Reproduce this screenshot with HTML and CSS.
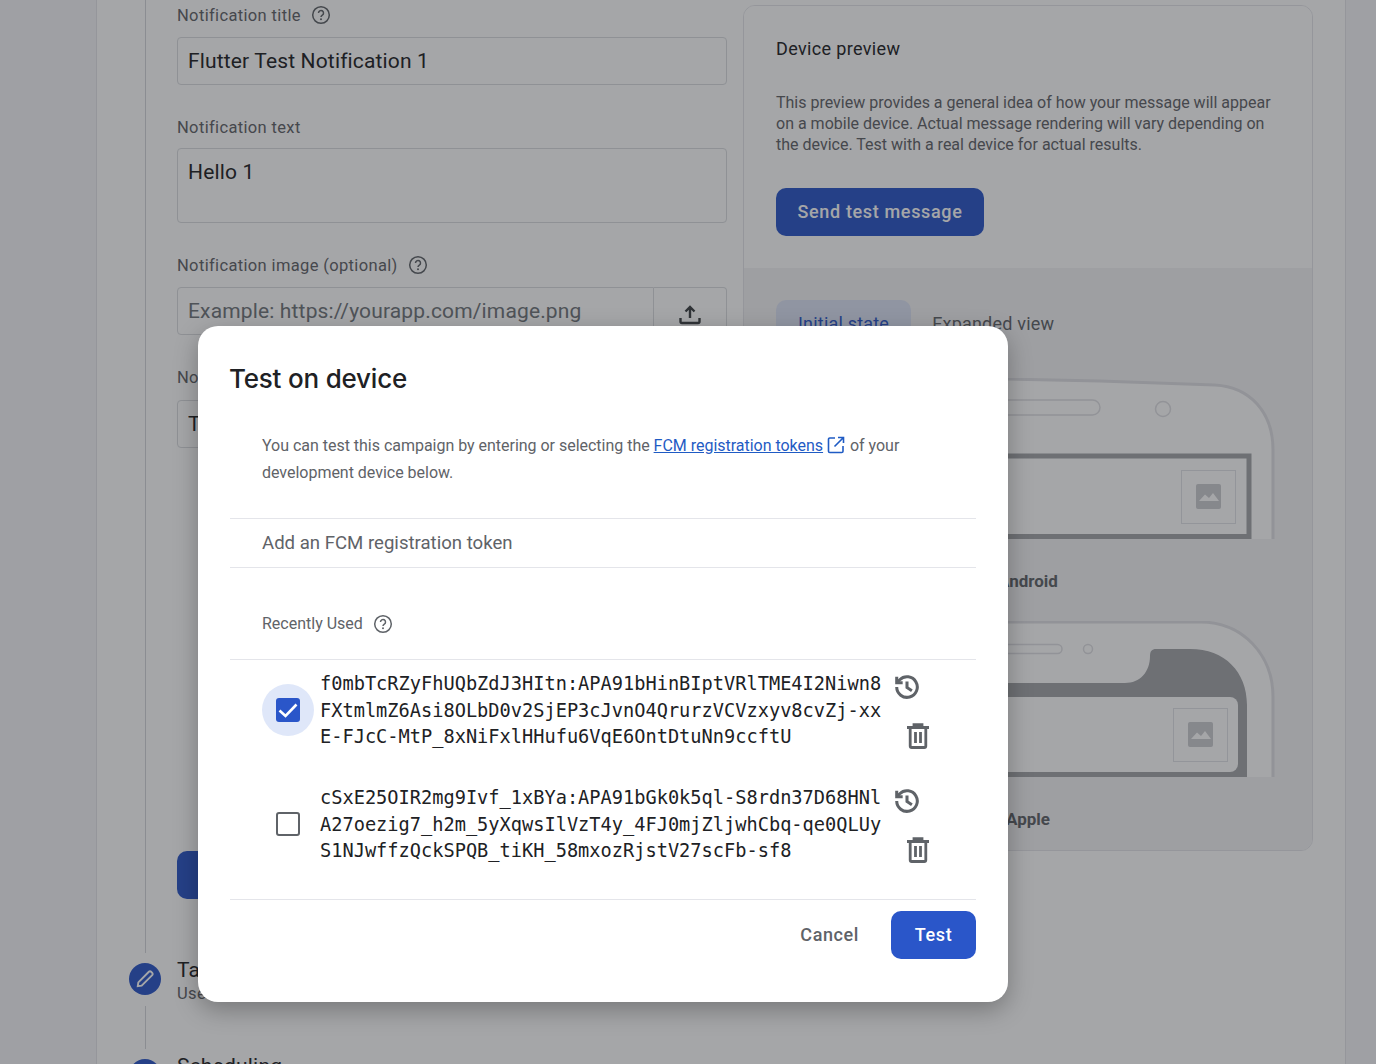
FILE: index.html
```html
<!DOCTYPE html>
<html lang="en">
    <head>
        <meta charset="UTF-8" />
        <meta name="viewport" content="width=device-width, initial-scale=1.0" />
        <title>Test on device</title>
        <link rel="stylesheet" href="styles.css">
    </head>
    <body>
        <div class="page">
            <div class="step-content">
                <form class="compose-form">
                    <div class="field-label">Notification title <svg class="help-icon" viewBox="0 0 20 20"><use href="#help" /></svg></div>
                    <input class="text-input" type="text" value="Flutter Test Notification 1" />

                    <div class="field-label">Notification text</div>
                    <textarea class="text-input text-area">Hello 1</textarea>

                    <div class="field-label">Notification image (optional) <svg class="help-icon" viewBox="0 0 20 20"><use href="#help" /></svg></div>
                    <div class="input-group">
                        <input class="text-input" type="text" placeholder="Example: https://yourapp.com/image.png" />
                        <div class="upload-button">
                            <svg width="24" height="24" viewBox="0 0 24 24" fill="none" stroke="#3c4043" stroke-width="2.4">
                                <path d="M12 16V5M7.5 9.5 12 5l4.500 4.500M2.500 16v3.500a1.500 1.500 0 0 0 1.500 1.500h16a1.500 1.500 0 0 0 1.500-1.500V16" />
                            </svg>
                        </div>
                    </div>

                    <div class="field-label field-label-tight">Notification name (optional)</div>
                    <input class="text-input" type="text" value="Test campaign" />

                    <button class="primary-button next-button" type="button">Next</button>
                </form>

                <section class="preview-panel">
                    <div class="preview-head">
                        <h3 class="preview-title">Device preview</h3>
                        <p class="preview-text">This preview provides a general idea of how your message will appear on a mobile device. Actual message rendering will vary depending on the device. Test with a real device for actual results.</p>
                        <button class="primary-button send-button" type="button">Send test message</button>
                    </div>
                    <div class="preview-body">
                        <div class="preview-tabs">
                            <span class="tab tab-active">Initial state</span>
                            <span class="tab">Expanded view</span>
                        </div>

                        <svg class="phone phone-android" width="495" height="161" viewBox="780 378 495 161">
                            <path class="phone-shell" d="M780 376 1008 379 1100 381 1215 385C1250 387 1273 412 1273 450V550H780Z" />
                            <rect class="phone-detail" x="900" y="400" width="200" height="15" rx="7.500" />
                            <circle class="phone-detail" cx="1163" cy="409" r="7.500" />
                            <rect class="phone-screen" x="800" y="456" width="449" height="80.500" />
                            <rect class="image-box" x="1181.500" y="470.500" width="54" height="53" />
                            <rect class="image-tile" x="1196" y="484" width="25" height="25" rx="2" />
                            <path class="image-peaks" d="M1199 501 1205 494.500 1209 498 1213 493 1219 501Z" />
                        </svg>
                        <div class="phone-label">Android</div>

                        <svg class="phone phone-apple" width="495" height="156" viewBox="780 621 495 156">
                            <path class="phone-shell" d="M780 622H1200C1243 622 1273 655 1273 697V790H780Z" />
                            <rect class="phone-detail" x="900" y="644.500" width="162" height="9" rx="4.500" />
                            <circle class="phone-detail" cx="1088" cy="649" r="4.500" />
                            <path class="phone-notch" d="M800 683H1125C1140 683 1150 672 1150 656 1150 651 1152 649 1156 649H1190C1225 649 1247 672 1247 705V777H800Z" />
                            <rect class="phone-card" x="800" y="697" width="438" height="75" rx="8" />
                            <rect class="image-box" x="1173.500" y="708.500" width="54" height="53" />
                            <rect class="image-tile" x="1188" y="722" width="25" height="25" rx="2" />
                            <path class="image-peaks" d="M1191 739 1197 732.500 1201 736 1205 731 1211 739Z" />
                        </svg>
                        <div class="phone-label">Apple</div>
                    </div>
                </section>
            </div>

            <div class="step-row">
                <span class="step-circle">
                    <svg width="20" height="20" viewBox="0 0 18 18" fill="none" stroke="#fff" stroke-width="1.700">
                        <path d="M2.500 15.500 3 12 12.500 2.500a1.400 1.400 0 0 1 2 0l1 1a1.400 1.400 0 0 1 0 2L6 15Z" />
                    </svg>
                </span>
                <div class="step-text">
                    <div class="step-title">Target</div>
                    <div class="step-sub">User segment</div>
                </div>
            </div>
            <div class="step-line"></div>
            <div class="step-row step-row-next">
                <span class="step-circle"></span>
                <div class="step-title">Scheduling</div>
            </div>
        </div>

        <div class="scrim"></div>

        <div class="dialog">
            <h2 class="dialog-title">Test on device</h2>
            <p class="dialog-text">You can test this campaign by entering or selecting the <a class="dialog-link" href="#">FCM registration tokens</a>
                <svg class="external-icon" width="18" height="18" viewBox="0 0 18 18" fill="none" stroke="#1f5bc4" stroke-width="1.600"><path d="M8 2H2.800A1.300 1.300 0 0 0 1.500 3.300v11.900a1.300 1.300 0 0 0 1.300 1.300h11.900a1.300 1.300 0 0 0 1.300-1.300V10M11 1.500h5.500V7M16.500 1.500 7.500 10.500" /></svg>
                of your development device below.</p>

            <input class="token-input" type="text" placeholder="Add an FCM registration token" />

            <div class="recent-head">Recently Used <svg class="help-icon" viewBox="0 0 20 20"><use href="#help" /></svg></div>

            <div class="token-list">
                <div class="token-row">
                    <span class="check-wrap check-wrap-on">
                        <span class="checkbox checkbox-on">
                            <svg width="24" height="24" viewBox="0 0 24 24" fill="none" stroke="#fff" stroke-width="2.600"><path d="M3.500 12.500 9.500 18 20.500 6.500" /></svg>
                        </span>
                    </span>
                    <div class="token-value">f0mbTcRZyFhUQbZdJ3HItn:APA91bHinBIptVRlTME4I2Niwn8FXtmlmZ6Asi8OLbD0v2SjEP3cJvnO4QrurzVCVzxyv8cvZj-xxE-FJcC-MtP_8xNiFxlHHufu6VqE6OntDtuNn9ccftU</div>
                    <div class="token-actions">
                        <svg class="history-icon" viewBox="0 0 24 24"><use href="#history" /></svg>
                        <svg class="trash-icon" viewBox="0 0 24 26"><use href="#trash" /></svg>
                    </div>
                </div>
                <div class="token-row">
                    <span class="check-wrap">
                        <span class="checkbox"></span>
                    </span>
                    <div class="token-value">cSxE25OIR2mg9Ivf_1xBYa:APA91bGk0k5ql-S8rdn37D68HNlA27oezig7_h2m_5yXqwsIlVzT4y_4FJ0mjZljwhCbq-qe0QLUyS1NJwffzQckSPQB_tiKH_58mxozRjstV27scFb-sf8</div>
                    <div class="token-actions">
                        <svg class="history-icon" viewBox="0 0 24 24"><use href="#history" /></svg>
                        <svg class="trash-icon" viewBox="0 0 24 26"><use href="#trash" /></svg>
                    </div>
                </div>
            </div>

            <div class="dialog-actions">
                <button class="cancel-button" type="button">Cancel</button>
                <button class="primary-button test-button" type="button">Test</button>
            </div>
        </div>

        <svg class="icon-defs" width="0" height="0">
            <symbol id="help" viewBox="0 0 20 20">
                <circle cx="10" cy="10" r="8.300" fill="none" stroke="currentColor" stroke-width="1.500" />
                <path d="M7.500 8a2.500 2.500 0 1 1 3.800 2.100c-.9.600-1.300 1-1.300 2" fill="none" stroke="currentColor" stroke-width="1.500" />
                <circle cx="10" cy="14.300" r="1" fill="currentColor" />
            </symbol>
            <symbol id="history" viewBox="0 0 24 24">
                <g fill="none" stroke="#5f6368" stroke-width="2.800">
                    <path d="M2.500 12a9.500 9.500 0 1 0 2.800-6.700L2.500 8" />
                    <path d="M2.500 2.500V8H8" />
                    <path d="M12 7v5.500l4.500 3" />
                </g>
            </symbol>
            <symbol id="trash" viewBox="0 0 24 26">
                <g fill="none" stroke="#5f6368" stroke-width="2.800">
                    <path d="M4.200 5v18a1.500 1.500 0 0 0 1.500 1.500h12.600a1.500 1.500 0 0 0 1.500-1.500V5" />
                    <path d="M1 4.500h22M8 4.500V1.700h8v2.800M9.500 9v11M14.500 9v11" />
                </g>
            </symbol>
        </svg>
    </body>
</html>
```

FILE: styles.css
```css
* {
    box-sizing: border-box;
}
body {
    margin: 0;
    height: 1064px;
    overflow: hidden;
    position: relative;
    background-color: #f6f6f9;
    font-family: Roboto, "Liberation Sans", sans-serif;
    color: #202124;
}

/* page behind the dialog */
.page {
    margin-left: 96px;
    width: 1250px;
    height: 1064px;
    overflow: hidden;
    background-color: #fff;
    border-left: 1px solid #e4e5ea;
    border-right: 1px solid #e4e5ea;
}
.step-content {
    display: flex;
    gap: 16px;
    height: 953px;
    margin-left: 48px;
    padding-left: 31px;
    border-left: 1px solid #d4d5da;
}
.compose-form {
    width: 550px;
    padding-top: 5px;
    flex-shrink: 0;
}
.field-label {
    display: flex;
    align-items: center;
    gap: 5px;
    height: 20px;
    margin-bottom: 12px;
    font-size: 16.500px;
    letter-spacing: 0.35px;
    color: #5f6368;
}
.field-label-tight {
    margin-bottom: 13px;
}
.help-icon {
    width: 20px;
    height: 20px;
    margin-left: 5px;
    color: #5f6368;
}
.text-input {
    display: block;
    width: 100%;
    height: 48px;
    margin-bottom: 32px;
    padding: 0 10px;
    border: 1px solid #dadce0;
    border-radius: 4px;
    background: #fff;
    font-family: inherit;
    font-size: 21px;
    letter-spacing: 0.15px;
    color: #202124;
}
.text-input::placeholder {
    color: #70757a;
    opacity: 1;
}
.text-area {
    height: 75px;
    margin-top: -1px;
    margin-bottom: 32px;
    padding-top: 11px;
    resize: none;
}
.input-group {
    display: flex;
    margin-bottom: 32px;
}
.input-group .text-input {
    width: 477px;
    margin-bottom: 0;
    border-radius: 4px 0 0 4px;
}
.upload-button {
    display: flex;
    align-items: center;
    justify-content: center;
    width: 73px;
    height: 48px;
    padding-top: 5px;
    border: 1px solid #dadce0;
    border-left: none;
    border-radius: 0 4px 4px 0;
}
.primary-button {
    padding: 0 0 2px;
    border: none;
    border-radius: 10px;
    background-color: #2a56c9;
    color: #fff;
    font-family: inherit;
    font-weight: 500;
    font-size: 18px;
    letter-spacing: 0.65px;
}
.next-button {
    display: block;
    width: 120px;
    height: 48px;
    margin-top: 403px;
}

.preview-panel {
    width: 570px;
    height: 846px;
    margin-top: 5px;
    overflow: hidden;
    border: 1px solid #e4e5ea;
    border-radius: 12px;
}
.preview-head {
    height: 262px;
    padding: 31px 32px 0;
    background-color: #fff;
}
.preview-title {
    margin: 0 0 31px;
    font-size: 18px;
    line-height: 24px;
    font-weight: 400;
    letter-spacing: 0.35px;
    color: #202124;
}
.preview-text {
    margin: 0 0 33px;
    font-size: 16px;
    line-height: 21px;
    color: #5f6368;
}
.send-button {
    width: 208px;
    height: 48px;
}
.preview-body {
    height: 584px;
    padding-top: 32px;
    background-color: #f4f4f6;
}
.preview-tabs {
    display: flex;
    align-items: center;
    gap: 21px;
    margin-left: 32px;
    margin-bottom: 32px;
}
.tab {
    height: 46px;
    line-height: 47px;
    font-size: 18px;
    letter-spacing: 0.2px;
    color: #5f6368;
}
.tab-active {
    padding: 0 22px;
    border-radius: 10px;
    background-color: #dce3f6;
    color: #2a56c9;
}
.phone {
    display: block;
    margin-left: 36px;
}
.phone-shell {
    fill: #fff;
    stroke: #e0e0e4;
    stroke-width: 3;
}
.phone-detail {
    fill: none;
    stroke: #e0e0e4;
    stroke-width: 1.500;
}
.phone-screen {
    fill: #fff;
    stroke: #a3a5a9;
    stroke-width: 5;
}
.phone-notch {
    fill: #a3a5a9;
}
.phone-card {
    fill: #fff;
}
.image-box {
    fill: none;
    stroke: #e2e3e8;
}
.image-tile {
    fill: #cccdd1;
}
.image-peaks {
    fill: #fff;
}
.phone-label {
    margin-top: 30px;
    margin-bottom: 28px;
    height: 24px;
    line-height: 24px;
    text-align: center;
    font-size: 17px;
    font-weight: 700;
    color: #5f6368;
}

.step-row {
    display: flex;
    align-items: center;
    gap: 16px;
    height: 46px;
    margin-top: 3px;
    margin-left: 32px;
}
.step-circle {
    display: flex;
    align-items: center;
    justify-content: center;
    flex-shrink: 0;
    width: 32px;
    height: 32px;
    border-radius: 50%;
    background-color: #2a56c9;
}
.step-text {
    margin-top: 4px;
}
.step-title {
    font-size: 21px;
    line-height: 24px;
    letter-spacing: 0.2px;
}
.step-sub {
    font-size: 16.500px;
    line-height: 23px;
    letter-spacing: 0.35px;
    color: #5f6368;
}
.step-line {
    height: 43px;
    margin: 4px 0 5px 48px;
    border-left: 1px solid #d4d5da;
}
.step-row-next {
    margin-top: 0;
    align-items: flex-start;
}
.step-row-next .step-circle {
    margin-top: 5px;
}

.scrim {
    position: absolute;
    inset: 0;
    background-color: rgba(31, 33, 38, 0.4);
}

/* dialog */
.dialog {
    position: absolute;
    left: 198px;
    top: 326px;
    width: 810px;
    height: 676px;
    padding: 32px 32px 0;
    border-radius: 20px;
    background-color: #fff;
    box-shadow: 0 8px 24px rgba(0, 0, 0, 0.28);
}
.dialog-title {
    margin: 0 0 32px -1px;
    height: 42px;
    line-height: 42px;
    font-family: Inter, Roboto, sans-serif;
    font-size: 26px;
    font-weight: 500;
    letter-spacing: -0.2px;
    color: #202124;
}
.dialog-text {
    margin: 0;
    height: 87px;
    padding: 0 32px;
    border-bottom: 1px solid #e4e5ea;
    font-size: 16px;
    line-height: 27px;
    letter-spacing: -0.02px;
    color: #5f6368;
}
.dialog-link {
    color: #1f5bc4;
}
.external-icon {
    vertical-align: -3px;
    margin: 0 1px 0 0;
}
.token-input {
    display: block;
    width: 100%;
    height: 49px;
    padding: 0 32px;
    border: none;
    border-bottom: 1px solid #e4e5ea;
    outline: none;
    font-family: inherit;
    font-size: 18.600px;
}
.token-input::placeholder {
    color: #5f6368;
    opacity: 1;
}
.recent-head {
    display: flex;
    align-items: center;
    gap: 5px;
    height: 92px;
    padding: 20px 32px 0;
    border-bottom: 1px solid #e4e5ea;
    font-size: 16px;
    color: #5f6368;
}
.token-list {
    height: 240px;
    padding-top: 11px;
    border-bottom: 1px solid #e4e5ea;
}
.token-row {
    display: flex;
    height: 114px;
    padding-left: 32px;
}
.check-wrap {
    display: flex;
    align-items: center;
    justify-content: center;
    flex-shrink: 0;
    width: 52px;
    height: 52px;
    margin-top: 13px;
    margin-right: 6px;
    border-radius: 50%;
}
.check-wrap-on {
    background-color: #dfe7f9;
}
.checkbox {
    display: block;
    width: 24px;
    height: 24px;
    border: 2px solid #5f6368;
    border-radius: 3px;
}
.checkbox-on {
    border: none;
    background-color: #2a56c9;
}
.checkbox-on svg {
    display: block;
}
.token-value {
    width: 564px;
    font-family: "DejaVu Sans Mono", "Liberation Mono", monospace;
    font-size: 18.650px;
    line-height: 26.500px;
    word-break: break-all;
    color: #202124;
}
.token-actions {
    width: 60px;
    margin-left: 10px;
}
.history-icon {
    display: block;
    width: 26px;
    height: 26px;
    margin-top: 3px;
}
.trash-icon {
    display: block;
    width: 24px;
    height: 26px;
    margin-top: 23px;
    margin-left: 12px;
}
.dialog-actions {
    display: flex;
    justify-content: flex-end;
    align-items: center;
    gap: 32px;
    padding-top: 11px;
}
.cancel-button {
    padding: 0 0 2px;
    border: none;
    background: none;
    font-family: inherit;
    font-size: 18px;
    font-weight: 500;
    letter-spacing: 0.6px;
    color: #5f6368;
}
.test-button {
    width: 85px;
    height: 48px;
}
.icon-defs {
    position: absolute;
}
```
